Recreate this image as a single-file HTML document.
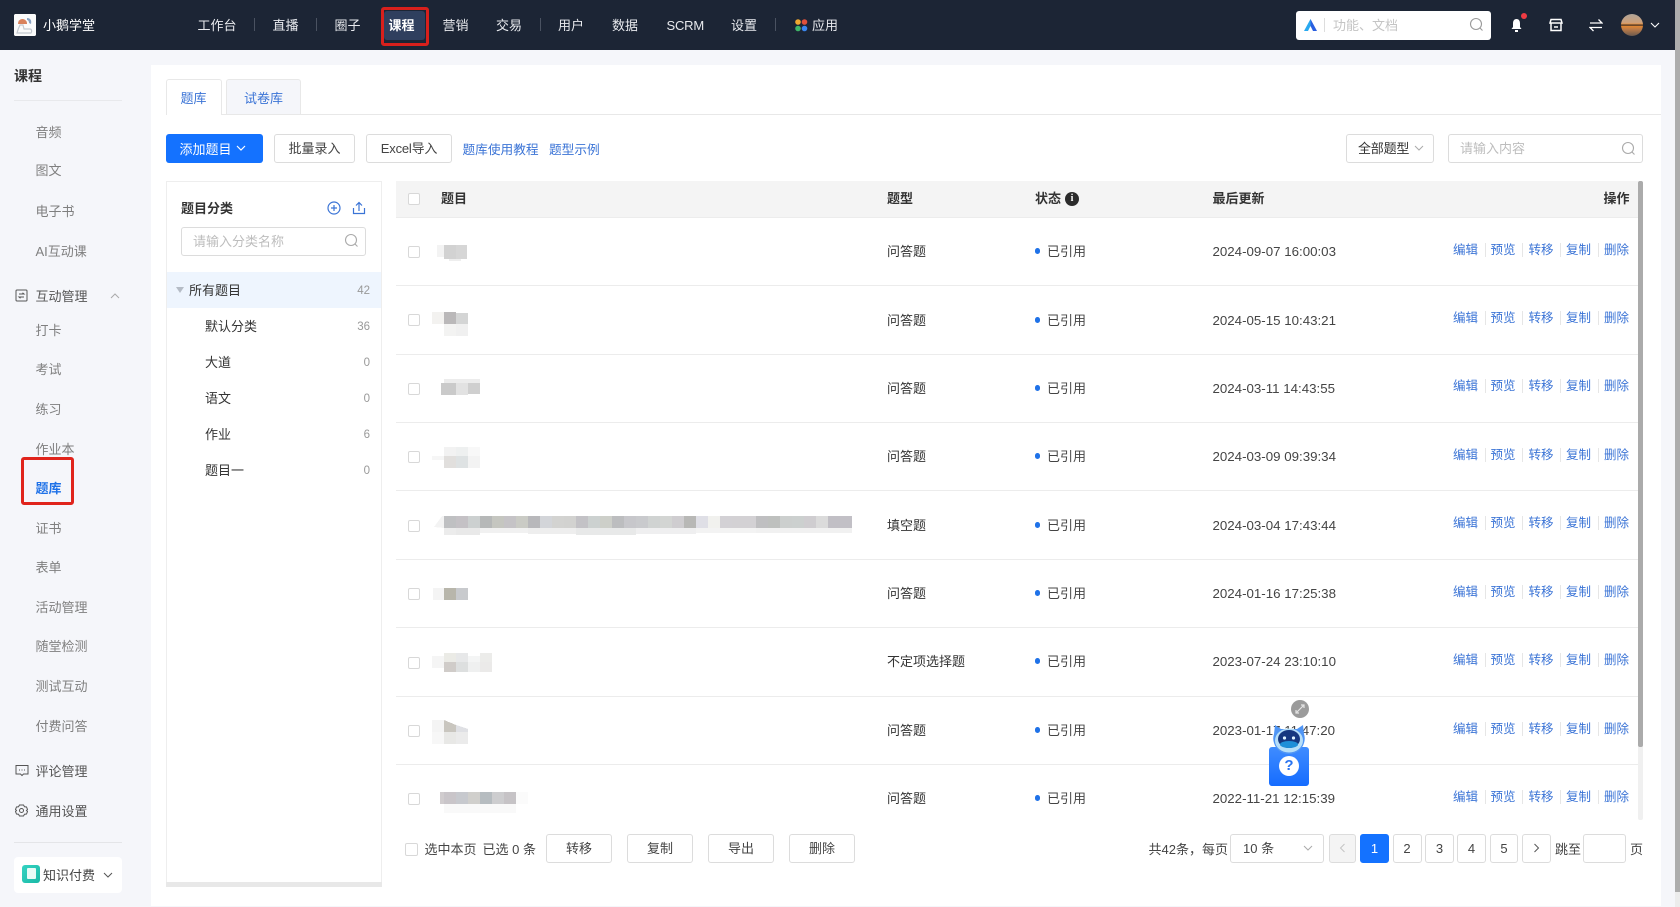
<!DOCTYPE html>
<html lang="zh"><head><meta charset="utf-8"><title>题库</title>
<style>
*{box-sizing:border-box}
html,body{margin:0;padding:0;width:1680px;height:907px;overflow:hidden;background:#f5f6fa;font-family:"Liberation Sans","Noto Sans CJK SC",sans-serif;font-size:13px;color:#333}
.a,.t,.b{position:absolute}
.t{white-space:nowrap;line-height:20px;margin-top:1px}
.nav{left:0;top:0;width:1675px;height:50px;background:#1c2535}
.n{color:#e8eaee}
.sep{position:absolute;top:18px;width:1px;height:13px;background:#4a5261}
.s{color:#7f7f7f;left:35.5px}
.m{color:#555;left:35.5px}
.b{border:1px solid #dcdcdc;border-radius:3px;background:#fff;text-align:center;line-height:28px;height:29px;color:#444}
.cb{position:absolute;width:12px;height:12px;border:1px solid #d8d8d8;border-radius:2px;background:#fff}
.line{position:absolute;left:396px;width:1242px;height:1px;background:#ececec}
.typ{left:887px}.st{left:1047px;color:#444}.dt{left:1212.5px;font-size:13.3px;color:#444}
.dot{position:absolute;left:1034.5px;width:5.5px;height:5.5px;border-radius:50%;background:#1f72e8}
.ops{position:absolute;left:0;width:0;height:20px;line-height:20px;font-size:12.5px;color:#3b74d6;margin-top:1px}
.ops span{position:absolute;top:0;white-space:nowrap}
.ops span:nth-child(1){left:1453px}.ops span:nth-child(2){left:1490.5px}.ops span:nth-child(3){left:1528.5px}.ops span:nth-child(4){left:1566px}.ops span:nth-child(5){left:1604px}
.ops span:not(:last-child)::after{content:"";position:absolute;left:31.5px;top:3px;width:1px;height:14px;background:#e6e6e6}
.cat{left:205px}.cnt{position:absolute;right:1310px;font-size:11.5px;color:#999;line-height:20px;margin-top:1px}
.pg{position:absolute;top:834px;height:29px;border:1px solid #dcdcdc;border-radius:3px;text-align:center;line-height:27px;background:#fff;color:#444;font-size:13px}
</style></head><body>

<!-- nav -->
<div class="a nav"></div>
<div class="a" style="left:14px;top:14px;width:22px;height:22px;background:#fff;border-radius:2px;overflow:hidden">
<svg width="22" height="22" viewBox="0 0 22 22"><rect width="22" height="22" fill="#fbfbfb"/><path d="M4 10a4.500 4.500 0 0 1 9-1v1H4z" fill="#d9825c"/><path d="M13 4c3 0 5 2 4 6l-2-1c0-2-1-3-2-3z" fill="#8aa3c4"/><path d="M3 19c1-4 2-6 3-8h3l1 4h6c2 0 2 3 1 4z" fill="none" stroke="#c4c9cf" stroke-width="1.200"/></svg></div>
<div class="t" style="left:43px;top:15px;color:#fff">小鹅学堂</div>
<div class="t n" style="left:197.500px;top:15px">工作台</div><div class="sep" style="left:254px"></div>
<div class="t n" style="left:272.500px;top:15px">直播</div><div class="sep" style="left:316px"></div>
<div class="t n" style="left:334.500px;top:15px">圈子</div>
<div class="a" style="left:384px;top:11px;width:41px;height:29px;background:#2f3f5e;border-radius:3px"></div>
<div class="t" style="left:388.500px;top:15px;color:#fff;font-weight:700">课程</div>
<div class="a" style="left:381px;top:7px;width:48px;height:39px;border:3px solid #d8201c;border-radius:3px"></div>
<div class="t n" style="left:442.500px;top:15px">营销</div>
<div class="t n" style="left:496px;top:15px">交易</div><div class="sep" style="left:540px"></div>
<div class="t n" style="left:558px;top:15px">用户</div>
<div class="t n" style="left:612px;top:15px">数据</div>
<div class="t n" style="left:666.500px;top:15px;letter-spacing:-.2px">SCRM</div>
<div class="t n" style="left:731px;top:15px">设置</div><div class="sep" style="left:775px"></div>
<svg class="a" style="left:795px;top:19px" width="13" height="13" viewBox="0 0 13 13"><circle cx="3" cy="3" r="2.800" fill="#f0a830"/><circle cx="9.500" cy="3" r="2.800" fill="#e0503a"/><circle cx="3" cy="9.500" r="2.800" fill="#3fb568"/><circle cx="9.500" cy="9.500" r="2.800" fill="#3a86ee"/></svg>
<div class="t n" style="left:812px;top:15px">应用</div>

<!-- top right -->
<div class="a" style="left:1296px;top:11px;width:195px;height:29px;background:#fff;border-radius:3px"></div>
<svg class="a" style="left:1303px;top:18px" width="15" height="14" viewBox="0 0 15 14"><path d="M7.500 1L1 13h4l2.500-5z" fill="#29a9f0"/><path d="M7.500 1L14 13h-4L7.500 8z" fill="#2a5fe0"/></svg>
<div class="a" style="left:1324px;top:18px;width:1px;height:14px;background:#ddd"></div>
<div class="t" style="left:1333px;top:15px;color:#c4c4c4">功能、文档</div>
<svg class="a" style="left:1469px;top:17px" width="15" height="15" viewBox="0 0 15 15" fill="none" stroke="#9a9a9a" stroke-width="1.100"><circle cx="7" cy="7" r="5.500"/><path d="M11 11l2.500 2.500"/></svg>
<svg class="a" style="left:1509px;top:17px" width="15" height="16" viewBox="0 0 15 16"><path d="M7.500 2C5 2 4 4 4 6.500V10l-1.500 2h10L11 10V6.500C11 4 10 2 7.500 2z" fill="#fff"/><rect x="6" y="13" width="3" height="2" fill="#fff"/></svg>
<div class="a" style="left:1521px;top:13px;width:6px;height:6px;border-radius:50%;background:#ef3b43"></div>
<svg class="a" style="left:1549px;top:18px" width="14" height="14" viewBox="0 0 14 14" fill="none" stroke="#fff" stroke-width="1.500"><path d="M2 1.500h10l1 3.500H1zM2 5v7.500h10V5M5 9h4"/></svg>
<svg class="a" style="left:1589px;top:18px" width="14" height="14" viewBox="0 0 14 14" fill="none" stroke="#fff" stroke-width="1.300"><path d="M1 5h12L9.500 1.500M13 9.500H1L4.500 13"/></svg>
<svg class="a" style="left:1621px;top:14px" width="22" height="22" viewBox="0 0 22 22"><defs><linearGradient id="sk" x1="0" y1="0" x2="0" y2="1"><stop offset="0" stop-color="#b0a498"/><stop offset=".4" stop-color="#cfa078"/><stop offset=".5" stop-color="#f08a2a"/><stop offset=".7" stop-color="#b97a48"/><stop offset="1" stop-color="#6b5a4e"/></linearGradient></defs><circle cx="11" cy="11" r="11" fill="url(#sk)"/><rect x="0" y="10.500" width="22" height="1.200" fill="#3a2c24"/></svg>
<svg class="a" style="left:1650px;top:22px" width="10" height="6" viewBox="0 0 10 6" fill="none" stroke="#fff" stroke-width="1.100"><path d="M1 1l4 4 4-4"/></svg>

<!-- page scrollbar -->
<div class="a" style="left:1675px;top:0;width:5px;height:892px;background:#adadad"></div>
<div class="a" style="left:1675px;top:892px;width:5px;height:15px;background:#ececec"></div>

<!-- sidebar -->
<div class="t" style="left:14px;top:65px;font-size:14px;font-weight:700;color:#333">课程</div>
<div class="a" style="left:14px;top:100px;width:108px;height:1px;background:#e8e9ec"></div>
<div class="t s" style="top:122px">音频</div>
<div class="t s" style="top:160px">图文</div>
<div class="t s" style="top:201px">电子书</div>
<div class="t s" style="top:241px">AI互动课</div>
<svg class="a" style="left:15px;top:289px" width="13" height="13" viewBox="0 0 13 13" fill="none" stroke="#555" stroke-width="1"><rect x="1" y="1" width="11" height="11" rx="1"/><path d="M4 5h5L7.500 3.800M9 8H4l1.500 1.300"/></svg>
<div class="t m" style="top:286px">互动管理</div>
<svg class="a" style="left:110px;top:293px" width="10" height="6" viewBox="0 0 10 6" fill="none" stroke="#aaa" stroke-width="1"><path d="M1 5l4-4 4 4"/></svg>
<div class="t s" style="top:320px">打卡</div>
<div class="t s" style="top:359px">考试</div>
<div class="t s" style="top:399px">练习</div>
<div class="t s" style="top:439px">作业本</div>
<div class="t" style="left:35.5px;top:478px;color:#1f72e8;font-weight:700">题库</div>
<div class="a" style="left:21px;top:457px;width:53px;height:48px;border:3px solid #e0241c;border-radius:3px"></div>
<div class="t s" style="top:518px">证书</div>
<div class="t s" style="top:557px">表单</div>
<div class="t s" style="top:597px">活动管理</div>
<div class="t s" style="top:636px">随堂检测</div>
<div class="t s" style="top:676px">测试互动</div>
<div class="t s" style="top:716px">付费问答</div>
<svg class="a" style="left:15px;top:764px" width="14" height="13" viewBox="0 0 14 13" fill="none" stroke="#555" stroke-width="1"><path d="M1 1.500h12v8.500H8.500L7 11.500 5.500 10H1zM4 6h1M6.500 6h1M9 6h1"/></svg>
<div class="t m" style="top:761px">评论管理</div>
<svg class="a" style="left:15px;top:804px" width="13" height="13" viewBox="0 0 13 13" fill="none" stroke="#555" stroke-width="1"><path d="M4.500 1h4l1 1.800 2 .2 1 2.500-1 1 1 1-1 2.500-2 .2-1 1.800h-4l-1-1.800-2-.2-1-2.500 1-1-1-1 1-2.500 2-.2z"/><circle cx="6.500" cy="6.500" r="2"/></svg>
<div class="t m" style="top:801px">通用设置</div>
<div class="a" style="left:14px;top:842px;width:108px;height:1px;background:#e4e5e8"></div>
<div class="a" style="left:14px;top:857px;width:108px;height:36px;background:#fff;border-radius:4px"></div>
<div class="a" style="left:22px;top:865px;width:18px;height:18px;border-radius:3px;background:linear-gradient(135deg,#35d3c2,#19b9a6)"></div>
<div class="a" style="left:27px;top:868px;width:9px;height:11px;background:#e8fbf7;border-radius:1px"></div>
<div class="t" style="left:43px;top:865px;color:#444">知识付费</div>
<svg class="a" style="left:103px;top:872px" width="10" height="6" viewBox="0 0 10 6" fill="none" stroke="#555" stroke-width="1"><path d="M1 1l4 4 4-4"/></svg>

<!-- card -->
<div class="a" style="left:151px;top:65px;width:1510px;height:841px;background:#fff"></div>
<div class="a" style="left:166px;top:114px;width:1495px;height:1px;background:#e8e8e8"></div>
<div class="a" style="left:166px;top:79px;width:56px;height:36px;background:#fff;border:1px solid #e8e8e8;border-bottom:none;border-radius:3px 3px 0 0"></div>
<div class="a" style="left:225.500px;top:79px;width:75px;height:35px;background:#f5f6fa;border:1px solid #e8e8e8;border-bottom:none;border-radius:3px 3px 0 0"></div>
<div class="t" style="left:180.500px;top:88px;color:#3b74d6">题库</div>
<div class="t" style="left:244px;top:88px;color:#3b74d6">试卷库</div>

<div class="a" style="left:166px;top:134px;width:97px;height:29px;background:#1472ff;border-radius:3px"></div>
<div class="t" style="left:179.500px;top:139px;color:#fff">添加题目</div>
<svg class="a" style="left:236px;top:145px" width="10" height="6" viewBox="0 0 10 6" fill="none" stroke="#fff" stroke-width="1.200"><path d="M1 1l4 4 4-4"/></svg>
<div class="b" style="left:274px;top:134px;width:81px">批量录入</div>
<div class="b" style="left:366px;top:134px;width:86px;letter-spacing:-.2px">Excel导入</div>
<div class="t" style="left:462.500px;top:139px;color:#3b74d6;font-size:12.700px">题库使用教程</div>
<div class="t" style="left:549px;top:139px;color:#3b74d6;font-size:12.700px">题型示例</div>

<div class="b" style="left:1346px;top:134px;width:88px;text-align:left;padding-left:11px;color:#333;letter-spacing:-.2px">全部题型</div>
<svg class="a" style="left:1414px;top:145px" width="10" height="6" viewBox="0 0 10 6" fill="none" stroke="#aaa" stroke-width="1"><path d="M1 1l4 4 4-4"/></svg>
<div class="b" style="left:1448px;top:134px;width:195px;text-align:left;padding-left:11px;color:#bdbdbd">请输入内容</div>
<svg class="a" style="left:1621px;top:141px" width="15" height="15" viewBox="0 0 15 15" fill="none" stroke="#aaa" stroke-width="1.100"><circle cx="7" cy="7" r="5.500"/><path d="M11 11l2.500 2.500"/></svg>

<!-- category panel -->
<div class="a" style="left:166px;top:181px;width:216px;height:706px;border:1px solid #eee;border-bottom:none"></div>
<div class="a" style="left:166px;top:882px;width:216px;height:5px;background:#e8e8e8"></div>
<div class="t" style="left:181px;top:198px;font-weight:700;color:#333">题目分类</div>
<svg class="a" style="left:327px;top:201px" width="14" height="14" viewBox="0 0 14 14" fill="none" stroke="#3b74d6" stroke-width="1.200"><circle cx="7" cy="7" r="6"/><path d="M7 4v6M4 7h6"/></svg>
<svg class="a" style="left:352px;top:201px" width="14" height="14" viewBox="0 0 14 14" fill="none" stroke="#3b74d6" stroke-width="1.200"><path d="M1.500 7v5.500h11V7M7 10V2M4 4.500L7 1.500l3 3"/></svg>
<div class="b" style="left:181px;top:227px;width:185px;text-align:left;padding-left:11px;color:#bdbdbd">请输入分类名称</div>
<svg class="a" style="left:344px;top:233px" width="15" height="15" viewBox="0 0 15 15" fill="none" stroke="#aaa" stroke-width="1.100"><circle cx="7" cy="7" r="5.500"/><path d="M11 11l2.500 2.500"/></svg>
<div class="a" style="left:167px;top:272px;width:214px;height:36px;background:#eef5fe"></div>
<div class="a" style="left:176px;top:287px;width:0;height:0;border-left:4.500px solid transparent;border-right:4.500px solid transparent;border-top:6px solid #b5bcc6"></div>
<div class="t" style="left:189px;top:280px">所有题目</div><div class="cnt" style="top:280px">42</div>
<div class="t cat" style="top:316px">默认分类</div><div class="cnt" style="top:316px">36</div>
<div class="t cat" style="top:352px">大道</div><div class="cnt" style="top:352px">0</div>
<div class="t cat" style="top:388px">语文</div><div class="cnt" style="top:388px">0</div>
<div class="t cat" style="top:424px">作业</div><div class="cnt" style="top:424px">6</div>
<div class="t cat" style="top:460px">题目一</div><div class="cnt" style="top:460px">0</div>

<!-- table head -->
<div class="a" style="left:396px;top:181px;width:1242px;height:37px;background:#f4f4f4;border-bottom:1px solid #ececec"></div>
<div class="cb" style="left:408px;top:193px"></div>
<div class="t" style="left:441px;top:188px;font-weight:700">题目</div>
<div class="t" style="left:887px;top:188px;font-weight:700">题型</div>
<div class="t" style="left:1035px;top:188px;font-weight:700">状态</div>
<div class="a" style="left:1065px;top:192px;width:14px;height:14px;border-radius:50%;background:#2b2b2b;color:#fff;font:700 10px/14px 'Liberation Serif',serif;text-align:center">i</div>
<div class="t" style="left:1212.500px;top:188px;font-weight:700">最后更新</div>
<div class="t" style="left:1603.500px;top:188px;font-weight:700">操作</div>

<!-- row lines -->
<div class="line" style="top:285px"></div><div class="line" style="top:354px"></div><div class="line" style="top:422px"></div><div class="line" style="top:490px"></div><div class="line" style="top:559px"></div><div class="line" style="top:627px"></div><div class="line" style="top:696px"></div><div class="line" style="top:764px"></div>

<!-- mosaic -->
<svg class="a" style="left:0;top:0" width="1680" height="907" shape-rendering="crispEdges">
<g>
<rect x="437" y="245" width="7" height="12" fill="#f3f3f3"/><rect x="444" y="245" width="12" height="14" fill="#d2d2d2"/><rect x="456" y="245" width="11" height="14" fill="#d6d6d6"/><rect x="449" y="259" width="12" height="2" fill="#eee"/>
<rect x="432" y="312" width="12" height="12" fill="#f3f2f0"/><rect x="444" y="312" width="12" height="12" fill="#bab8b9"/><rect x="456" y="313" width="12" height="11" fill="#d4d5d5"/><rect x="444" y="324" width="12" height="12" fill="#f3f3f2"/><rect x="456" y="324" width="12" height="12" fill="#f0f0f0"/>
<rect x="444" y="379" width="36" height="4" fill="#ececec"/><rect x="441" y="383" width="15" height="12" fill="#cacaca"/><rect x="456" y="383" width="12" height="12" fill="#e2e2e2"/><rect x="468" y="383" width="12" height="11" fill="#cfcfcf"/>
<rect x="444" y="447" width="12" height="9" fill="#f2f2f2"/><rect x="456" y="447" width="12" height="9" fill="#eef0f0"/><rect x="468" y="447" width="12" height="9" fill="#f8f8f8"/><rect x="432" y="456" width="12" height="4" fill="#f6f6f6"/><rect x="444" y="456" width="12" height="12" fill="#e1dfdd"/><rect x="456" y="456" width="12" height="12" fill="#dee2e3"/><rect x="468" y="456" width="12" height="12" fill="#f3f3f3"/>
<path d="M434 527l8-11h2v12z" fill="#f3f3f3"/>
<rect x="444" y="516" width="12" height="12" fill="#bfc0c2"/><rect x="456" y="516" width="12" height="12" fill="#c4c1c5"/><rect x="468" y="516" width="12" height="12" fill="#ccd0d0"/><rect x="480" y="516" width="12" height="12" fill="#b6b8b8"/><rect x="492" y="516" width="12" height="12" fill="#c5c6c0"/><rect x="504" y="516" width="12" height="12" fill="#c5c3c6"/><rect x="516" y="516" width="12" height="12" fill="#cacbc5"/><rect x="528" y="516" width="12" height="12" fill="#b8b8bb"/><rect x="540" y="516" width="12" height="12" fill="#d3d5d9"/><rect x="552" y="516" width="12" height="12" fill="#d3d3d1"/><rect x="564" y="516" width="12" height="12" fill="#d2d2d0"/><rect x="576" y="516" width="12" height="12" fill="#c3c2c6"/><rect x="588" y="516" width="12" height="12" fill="#ccd1d0"/><rect x="600" y="516" width="12" height="12" fill="#cdcfc9"/><rect x="612" y="516" width="12" height="12" fill="#bcbdbf"/><rect x="624" y="516" width="12" height="12" fill="#c7c7cb"/><rect x="636" y="516" width="12" height="12" fill="#c9cacd"/><rect x="648" y="516" width="12" height="12" fill="#d0d3d2"/><rect x="660" y="516" width="12" height="12" fill="#d3d5d3"/><rect x="672" y="516" width="12" height="12" fill="#cfcdd0"/><rect x="684" y="516" width="12" height="12" fill="#b8b8b6"/><rect x="696" y="516" width="12" height="12" fill="#dfdfe6"/><rect x="708" y="516" width="12" height="12" fill="#f1f1ee"/><rect x="720" y="516" width="12" height="12" fill="#d3d1d5"/><rect x="732" y="516" width="12" height="12" fill="#d3d1d4"/><rect x="744" y="516" width="12" height="12" fill="#d3d1d4"/><rect x="756" y="516" width="12" height="12" fill="#bfbfc1"/><rect x="768" y="516" width="12" height="12" fill="#bec0be"/><rect x="780" y="516" width="12" height="12" fill="#cccfce"/><rect x="792" y="516" width="12" height="12" fill="#ccd0cf"/><rect x="804" y="516" width="12" height="12" fill="#cfcdd0"/><rect x="816" y="516" width="12" height="12" fill="#dbdbdb"/><rect x="828" y="516" width="12" height="12" fill="#c1bfc5"/><rect x="840" y="516" width="12" height="12" fill="#c2c0c6"/>
<rect x="444" y="528" width="36" height="7" fill="#ececec"/><rect x="456" y="528" width="24" height="7" fill="#e9e9e9"/><rect x="480" y="528" width="48" height="5" fill="#f1f1f1"/><rect x="528" y="528" width="48" height="6" fill="#eeeeee"/><rect x="576" y="528" width="60" height="7" fill="#e8e9e9"/><rect x="636" y="528" width="60" height="6" fill="#efeff0"/><rect x="696" y="528" width="60" height="5" fill="#f3f3f3"/><rect x="756" y="528" width="96" height="5" fill="#f1f1f1"/>
<rect x="433" y="588" width="11" height="12" fill="#f4f4f4"/><rect x="444" y="588" width="12" height="12" fill="#b8b6ab"/><rect x="456" y="588" width="12" height="12" fill="#c8cacd"/>
<rect x="432" y="656" width="12" height="12" fill="#f5f5f5"/><rect x="444" y="653" width="12" height="9" fill="#ebebe6"/><rect x="456" y="653" width="12" height="9" fill="#e7e8e9"/><rect x="468" y="656" width="12" height="6" fill="#f4f5f5"/><rect x="480" y="653" width="12" height="9" fill="#ececea"/><rect x="444" y="662" width="12" height="10" fill="#d0ccc9"/><rect x="456" y="662" width="12" height="10" fill="#dddfdf"/><rect x="468" y="662" width="12" height="10" fill="#eff0f0"/><rect x="480" y="662" width="12" height="10" fill="#ebeae9"/>
<rect x="432" y="720" width="12" height="12" fill="#f4f4f4"/><path d="M444 720l12 5v7h-12z" fill="#c9c6bf"/><path d="M456 725l12 4v3h-12z" fill="#dfe0e4"/><rect x="432" y="732" width="12" height="12" fill="#f7f7f7"/><rect x="444" y="732" width="12" height="12" fill="#e8e8e6"/><rect x="456" y="732" width="12" height="12" fill="#ebebeb"/>
<rect x="440" y="792" width="4" height="12" fill="#d0ccce"/><rect x="444" y="792" width="12" height="12" fill="#c9c5c9"/><rect x="456" y="792" width="12" height="12" fill="#c7c9ce"/><rect x="468" y="792" width="12" height="12" fill="#d0cfcc"/><rect x="480" y="792" width="12" height="12" fill="#b6bcc0"/><rect x="492" y="792" width="12" height="12" fill="#cdcdcf"/><rect x="504" y="792" width="12" height="12" fill="#c6c3c6"/><rect x="516" y="792" width="12" height="12" fill="#fbfbfb"/><rect x="444" y="804" width="72" height="9" fill="#f9f9f9"/>
</g></svg>

<!-- rows -->
<div class="cb" style="left:408px;top:246px"></div><div class="t typ" style="top:241px">问答题</div><div class="dot" style="top:248px"></div><div class="t st" style="top:241px">已引用</div><div class="t dt" style="top:241px">2024-09-07 16:00:03</div><div class="ops" style="top:239px"><span>编辑</span><span>预览</span><span>转移</span><span>复制</span><span>删除</span></div>
<div class="cb" style="left:408px;top:314px"></div><div class="t typ" style="top:309.500px">问答题</div><div class="dot" style="top:317px"></div><div class="t st" style="top:309.500px">已引用</div><div class="t dt" style="top:309.500px">2024-05-15 10:43:21</div><div class="ops" style="top:307px"><span>编辑</span><span>预览</span><span>转移</span><span>复制</span><span>删除</span></div>
<div class="cb" style="left:408px;top:383px"></div><div class="t typ" style="top:378px">问答题</div><div class="dot" style="top:385px"></div><div class="t st" style="top:378px">已引用</div><div class="t dt" style="top:378px">2024-03-11 14:43:55</div><div class="ops" style="top:375px"><span>编辑</span><span>预览</span><span>转移</span><span>复制</span><span>删除</span></div>
<div class="cb" style="left:408px;top:451px"></div><div class="t typ" style="top:446px">问答题</div><div class="dot" style="top:453px"></div><div class="t st" style="top:446px">已引用</div><div class="t dt" style="top:446px">2024-03-09 09:39:34</div><div class="ops" style="top:444px"><span>编辑</span><span>预览</span><span>转移</span><span>复制</span><span>删除</span></div>
<div class="cb" style="left:408px;top:520px"></div><div class="t typ" style="top:515px">填空题</div><div class="dot" style="top:522px"></div><div class="t st" style="top:515px">已引用</div><div class="t dt" style="top:515px">2024-03-04 17:43:44</div><div class="ops" style="top:512px"><span>编辑</span><span>预览</span><span>转移</span><span>复制</span><span>删除</span></div>
<div class="cb" style="left:408px;top:588px"></div><div class="t typ" style="top:583px">问答题</div><div class="dot" style="top:590px"></div><div class="t st" style="top:583px">已引用</div><div class="t dt" style="top:583px">2024-01-16 17:25:38</div><div class="ops" style="top:581px"><span>编辑</span><span>预览</span><span>转移</span><span>复制</span><span>删除</span></div>
<div class="cb" style="left:408px;top:657px"></div><div class="t typ" style="top:651px">不定项选择题</div><div class="dot" style="top:658px"></div><div class="t st" style="top:651px">已引用</div><div class="t dt" style="top:651px">2023-07-24 23:10:10</div><div class="ops" style="top:649px"><span>编辑</span><span>预览</span><span>转移</span><span>复制</span><span>删除</span></div>
<div class="cb" style="left:408px;top:725px"></div><div class="t typ" style="top:720px">问答题</div><div class="dot" style="top:727px"></div><div class="t st" style="top:720px">已引用</div><div class="t dt" style="top:720px">2023-01-17 11:47:20</div><div class="ops" style="top:717.500px"><span>编辑</span><span>预览</span><span>转移</span><span>复制</span><span>删除</span></div>
<div class="cb" style="left:408px;top:793px"></div><div class="t typ" style="top:788px">问答题</div><div class="dot" style="top:795px"></div><div class="t st" style="top:788px">已引用</div><div class="t dt" style="top:788px">2022-11-21 12:15:39</div><div class="ops" style="top:786px"><span>编辑</span><span>预览</span><span>转移</span><span>复制</span><span>删除</span></div>

<!-- table scrollbar -->
<div class="a" style="left:1638px;top:181px;width:5px;height:639px;background:#f0f0f0;border-radius:2px"></div>
<div class="a" style="left:1638px;top:181px;width:5px;height:566px;background:#ababab;border-radius:2px"></div>

<!-- bottom actions -->
<div class="cb" style="left:405px;top:843px;width:13px;height:13px"></div>
<div class="t" style="left:424.500px;top:839px;color:#444">选中本页</div>
<div class="t" style="left:482.500px;top:839px;color:#444">已选 0 条</div>
<div class="b" style="left:546px;top:834px;width:66px">转移</div>
<div class="b" style="left:627px;top:834px;width:66px">复制</div>
<div class="b" style="left:708px;top:834px;width:66px">导出</div>
<div class="b" style="left:789px;top:834px;width:66px">删除</div>

<!-- pagination -->
<div class="t" style="left:1148.500px;top:839px;color:#444">共42条，每页</div>
<div class="pg" style="left:1230px;width:94px;text-align:left;padding-left:12px">10 条</div>
<svg class="a" style="left:1303px;top:845px" width="10" height="6" viewBox="0 0 10 6" fill="none" stroke="#aaa" stroke-width="1"><path d="M1 1l4 4 4-4"/></svg>
<div class="pg" style="left:1328.500px;width:27px;background:#f4f4f4"><svg width="7" height="10" viewBox="0 0 7 10" fill="none" stroke="#c4c4c4" stroke-width="1"><path d="M5.500 1L1.500 5l4 4"/></svg></div>
<div class="pg" style="left:1360px;width:29px;background:#1472ff;border-color:#1472ff;color:#fff">1</div>
<div class="pg" style="left:1392.500px;width:29px">2</div>
<div class="pg" style="left:1425px;width:29px">3</div>
<div class="pg" style="left:1457px;width:29px">4</div>
<div class="pg" style="left:1490px;width:28px">5</div>
<div class="pg" style="left:1522px;width:29px"><svg width="7" height="10" viewBox="0 0 7 10" fill="none" stroke="#555" stroke-width="1"><path d="M1.500 1l4 4-4 4"/></svg></div>
<div class="t" style="left:1555px;top:839px;color:#444">跳至</div>
<div class="pg" style="left:1583px;width:43px"></div>
<div class="t" style="left:1630px;top:839px;color:#444">页</div>

<!-- bot -->
<div class="a" style="left:1291px;top:700px;width:18px;height:18px;border-radius:50%;background:#9b9b9b"></div>
<svg class="a" style="left:1295px;top:704px" width="10" height="10" viewBox="0 0 10 10" fill="none" stroke="#e4e4e4" stroke-width="1.200"><path d="M1 9l8-8M6 1h3v3M1 6v3h3"/></svg>
<div class="a" style="left:1269px;top:747px;width:40px;height:39px;border-radius:3px;background:linear-gradient(#3f8cff,#156cff)"></div>
<svg class="a" style="left:1271px;top:724px" width="36" height="32" viewBox="0 0 36 32"><path d="M4 1l6 4h16l6-4 1 9c1 3 1 6 0 9-2 7-8 11-15 11S5 26 3 19c-1-3-1-6 0-9z" fill="#4f95f5"/><ellipse cx="18" cy="16.500" rx="14" ry="12" fill="#b6def8"/><ellipse cx="18" cy="15" rx="11" ry="9" fill="#16377f"/><ellipse cx="18" cy="20.500" rx="9" ry="3.500" fill="#1f8fd8"/><circle cx="13.500" cy="14" r="1.600" fill="#dff3ff"/><circle cx="22.500" cy="14" r="1.600" fill="#dff3ff"/></svg>
<div class="a" style="left:1279px;top:756px;width:20px;height:20px;border-radius:50%;background:#fff;color:#2a74f0;font:700 15px/20px 'Liberation Sans',sans-serif;text-align:center">?</div>
</body></html>
